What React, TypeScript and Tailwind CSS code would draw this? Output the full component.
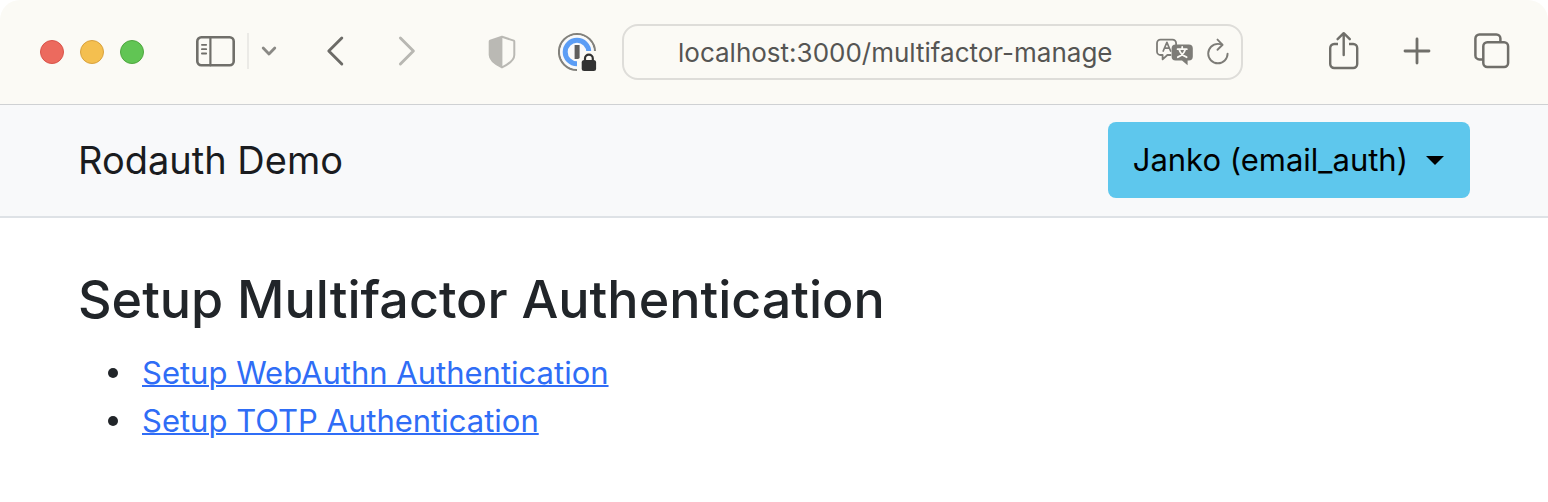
import React from "react";

function SidebarIcon() {
  return (
    <svg className="h-8 w-10" viewBox="0 0 40 32" fill="none" stroke="#706f6a" strokeWidth="2.6" strokeLinecap="round">
      <rect x="2.3" y="2.3" width="36.4" height="28" rx="4" />
      <path d="M15.4 2.3V30.3" strokeWidth="2.2" />
      <path d="M6.9 9.8H11.2M6.9 14.2H11.2M6.9 18.5H11.2" strokeWidth="1.8" />
    </svg>
  );
}

function ChevronDownIcon() {
  return (
    <svg className="h-4 w-4" viewBox="0 0 16 16" fill="none" stroke="#8a8985" strokeWidth="2.8" strokeLinecap="round" strokeLinejoin="round">
      <path d="M2.2 5L8 11L13.8 5" />
    </svg>
  );
}

function BackIcon() {
  return (
    <svg className="h-8 w-5" viewBox="0 0 20 32" fill="none" stroke="#6c6b67" strokeWidth="2.9" strokeLinecap="round" strokeLinejoin="round">
      <path d="M16.8 3L3.8 16L16.8 29" />
    </svg>
  );
}

function ForwardIcon() {
  return (
    <svg className="h-8 w-5" viewBox="0 0 20 32" fill="none" stroke="#b8b7b2" strokeWidth="2.9" strokeLinecap="round" strokeLinejoin="round">
      <path d="M3.4 3L16.4 16L3.4 29" />
    </svg>
  );
}

function ShieldIcon() {
  return (
    <svg className="h-9 w-7" viewBox="0 0 28 36" fill="none">
      <path d="M14 2.8L25.8 6.6C26.2 6.8 26.3 7 26.3 7.4V21C26.3 26.5 21 30 14 33.4C7 30 1.7 26.5 1.7 21V7.4C1.7 7 1.8 6.8 2.2 6.6Z" stroke="#bab9b4" strokeWidth="2" strokeLinejoin="round" />
      <path d="M14.4 2.6L2.2 6.6C1.8 6.8 1.4 7 1.4 7.6V21C1.4 26.5 7 30 14.4 33.6Z" fill="#bab9b4" />
    </svg>
  );
}

function PasswordIcon() {
  return (
    <svg className="h-10 w-10" viewBox="0 0 40 40" fill="none">
      <circle cx="19" cy="20" r="18" stroke="#82817c" strokeWidth="2.2" />
      <circle cx="19" cy="20" r="16.8" fill="#f8f9fa" />
      <circle cx="19" cy="20" r="11.8" stroke="#5b9df5" strokeWidth="5" />
      <rect x="16.6" y="13" width="5" height="14" fill="#5e5e5e" />
      <path d="M19 27.5L22 26L27 19H40V40H19Z" fill="#fbfaf5" />
      <rect x="23.7" y="28" width="14.4" height="11" rx="2.5" fill="#323232" />
      <path d="M27 28.5V26.5A3.9 3.9 0 0 1 34.8 26.5V28.5" stroke="#323232" strokeWidth="2.2" />
    </svg>
  );
}

function TranslateIcon() {
  return (
    <svg className="h-7 w-10" viewBox="0 0 40 28" fill="none" stroke="#7d7c77" strokeLinecap="round" strokeLinejoin="round">
      <path d="M15.5 17H12.4L7.6 21.3V17H5.5A3.6 3.6 0 0 1 2 13.4V5.2A3.6 3.6 0 0 1 5.5 1.6H17.5A3.6 3.6 0 0 1 21.1 5.2V6.4" strokeWidth="1.8" />
      <path d="M8.2 13L11.9 4.4L15.6 13M9.5 10.2H14.3" strokeWidth="1.7" />
      <path d="M20.6 6.4H33.8A4 4 0 0 1 37.8 10.4V18.6A4 4 0 0 1 33.8 22.6H32.6V27.2L27 22.6H20.6A4 4 0 0 1 16.6 18.6V10.4A4 4 0 0 1 20.6 6.4Z" fill="#7d7c77" stroke="none" />
      <path d="M22.6 11.2H31.8M27.2 9V11.2M30.2 11.6C29.2 15.2 26.6 17.8 22.8 19.2M24.2 11.6C25.2 15.2 27.8 17.8 31.6 19.2" stroke="#fbfaf5" strokeWidth="1.8" />
    </svg>
  );
}

function ReloadIcon() {
  return (
    <svg className="h-7 w-6" viewBox="0 0 24 28" fill="none" stroke="#7d7c77" strokeWidth="1.9" strokeLinecap="round" strokeLinejoin="round">
      <path d="M21.6 15.6A9.7 9.7 0 1 1 11.9 5.9C13.4 5.9 14.8 6.1 16 6.6" />
      <path d="M11.5 1.6L16.6 6.8L11.5 11.8" />
    </svg>
  );
}

function ShareIcon() {
  return (
    <svg className="h-10 w-8" viewBox="0 0 32 40" fill="none" stroke="#706f6a" strokeWidth="2.4" strokeLinecap="round" strokeLinejoin="round">
      <path d="M10 13H6.2A4 4 0 0 0 2.2 17V33A4 4 0 0 0 6.2 37H25.2A4 4 0 0 0 29.2 33V17A4 4 0 0 0 25.2 13H21" strokeLinecap="butt" />
      <path d="M15.7 24V2.4M9.6 8.2L15.7 2.2L21.8 8.2" />
    </svg>
  );
}

function PlusIcon() {
  return (
    <svg className="h-7 w-7" viewBox="0 0 28 28" fill="none" stroke="#706f6a" strokeWidth="2.8" strokeLinecap="round">
      <path d="M14 2V26M2 14H26" />
    </svg>
  );
}

function TabsIcon() {
  return (
    <svg className="h-9 w-9" viewBox="0 0 36 36" fill="none" stroke="#706f6a" strokeWidth="2.5">
      <path d="M9 26.4H5.4A4 4 0 0 1 1.4 22.4V5.4A4 4 0 0 1 5.4 1.4H22.4A4 4 0 0 1 26.4 5.4V9" />
      <rect x="9.3" y="9.2" width="24.8" height="24.8" rx="4" />
    </svg>
  );
}

function BrowserToolbar() {
  return (
    <header className="flex h-[105px] items-center rounded-t-[20px] border-b border-[#cfd1d3] bg-[#fbfaf5] pr-[38px] pl-10">
      <div className="flex gap-4">
        <button aria-label="Close window" className="size-6 rounded-full border border-[#d9544a] bg-[#ec6a5e]" />
        <button aria-label="Minimize window" className="size-6 rounded-full border border-[#d9a23e] bg-[#f4bf4f]" />
        <button aria-label="Zoom window" className="size-6 rounded-full border border-[#4fa73f] bg-[#61c554]" />
      </div>
      <div className="ml-[51px] flex items-center gap-3 pb-0.5">
        <button aria-label="Show sidebar"><SidebarIcon /></button>
        <div className="h-9 w-0.5 bg-[#ebeae6]" />
        <button aria-label="Tab groups" className="flex"><ChevronDownIcon /></button>
      </div>
      <div className="ml-12 flex gap-13 pb-0.5">
        <button aria-label="Back"><BackIcon /></button>
        <button aria-label="Forward"><ForwardIcon /></button>
      </div>
      <div className="ml-[71px] flex items-center gap-[42px]">
        <button aria-label="Privacy report"><ShieldIcon /></button>
        <button aria-label="Password manager"><PasswordIcon /></button>
      </div>
      <div className="ml-6 flex h-14 min-w-0 flex-1 items-center rounded-2xl border-2 border-[#deddd9] pr-[11px] pl-[54px]">
        <input
          aria-label="Address"
          type="text"
          defaultValue="localhost:3000/multifactor-manage"
          className="min-w-0 flex-1 bg-transparent text-[26px] text-[#555553] outline-none"
        />
        <button aria-label="Translate page" className="mr-[11px]"><TranslateIcon /></button>
        <button aria-label="Reload page"><ReloadIcon /></button>
      </div>
      <div className="ml-[85px] flex items-center gap-[43px] pb-0.5">
        <button aria-label="Share"><ShareIcon /></button>
        <button aria-label="New tab"><PlusIcon /></button>
        <button aria-label="Show all tabs"><TabsIcon /></button>
      </div>
    </header>
  );
}

const setupLinks = [
  { href: "/webauthn-setup", label: "Setup WebAuthn Authentication" },
  { href: "/otp-setup", label: "Setup TOTP Authentication" },
];

export default function App() {
  return (
    <div className="min-h-screen bg-white font-['Inter','Liberation_Sans',sans-serif] text-[#212529]">
      <BrowserToolbar />
      <nav className="flex items-center justify-between border-b-2 border-[#dee2e6] bg-[#f8f9fa] px-[78px] pt-[17px] pb-[18px]">
        <a href="/" className="text-[38px] text-[#1a1c1f]">Rodauth Demo</a>
        <button className="flex h-[76px] items-center gap-[18px] rounded-lg bg-[#5ec7ed] pr-[26px] pl-[25px] text-[31px] text-black">
          Janko (email_auth)
          <svg className="h-[9px] w-[18px]" viewBox="0 0 18 9"><path d="M0 0H18L9 9Z" fill="currentColor" /></svg>
        </button>
      </nav>
      <main className="px-[78px] pt-12">
        <h1 className="text-[52px]/[68px] font-medium">Setup Multifactor Authentication</h1>
        <ul className="mt-[15px] pl-[30px] text-[31px]/12">
          {setupLinks.map(({ href, label }) => (
            <li key={href} className="flex items-center gap-6 before:size-2.5 before:shrink-0 before:rounded-full before:bg-[#212529]">
              <a href={href} className="text-[#2f6df6] underline decoration-2">{label}</a>
            </li>
          ))}
        </ul>
      </main>
    </div>
  );
}
